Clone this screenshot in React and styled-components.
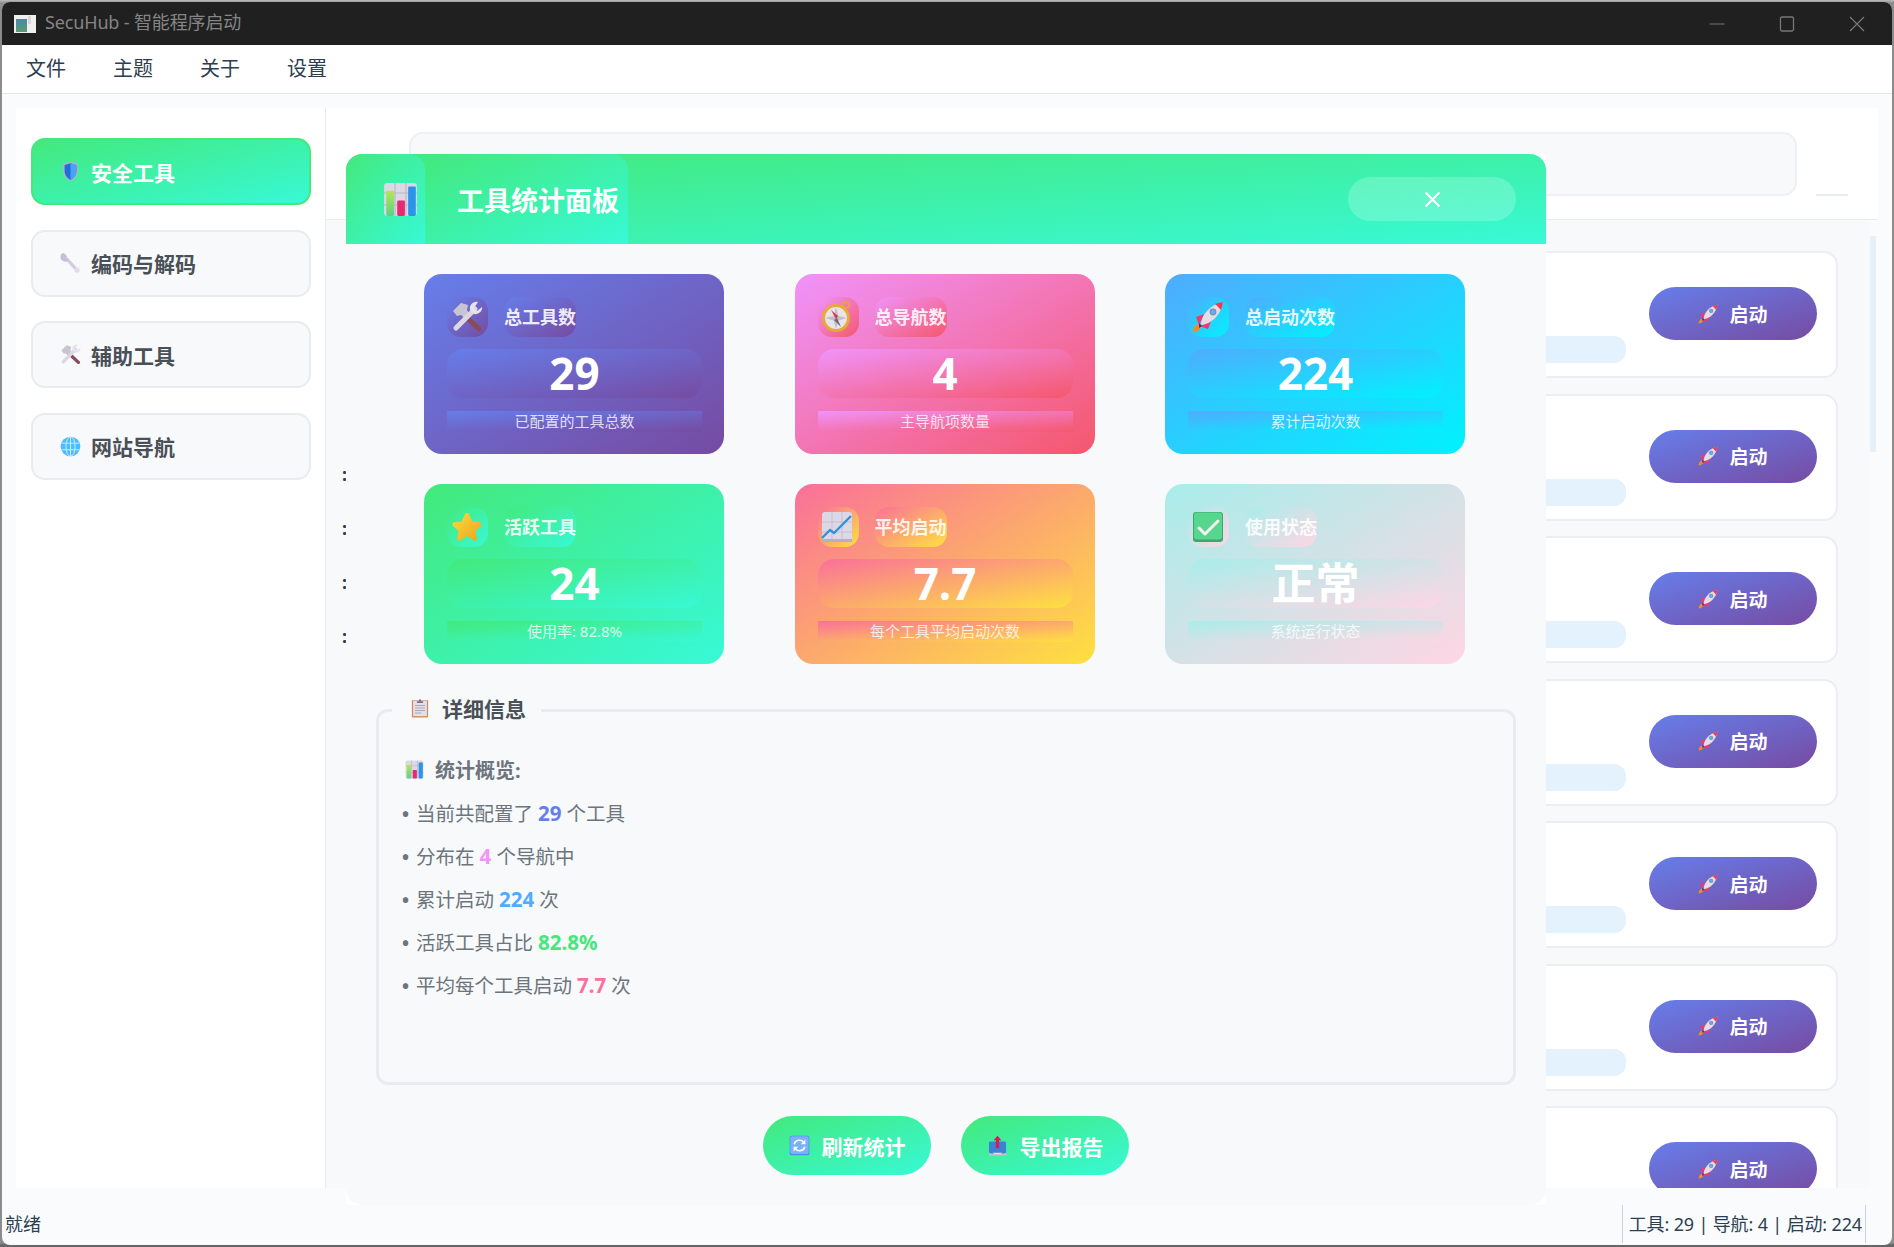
import React from 'react'
import styled, { createGlobalStyle } from 'styled-components'

const FONT = '"Noto Sans", "Noto Sans CJK SC", sans-serif'

const Global = createGlobalStyle`
  html, body { margin: 0; height: 100%; }
  body {
    background: linear-gradient(#bdbdbd 0, #8c8c8c 3px, #8c8c8c 1243px, #666 1245px);
    font-family: ${FONT};
    overflow: hidden;
  }
  * { box-sizing: border-box; }
`

// corner to corner, whatever the shape of the box
const gradient = (pair) => `linear-gradient(to bottom right, ${pair[0]}, ${pair[1]})`

const PURPLE = ['#667eea', '#764ba2']
const PINK = ['#f093fb', '#f5576c']
const BLUE = ['#4facfe', '#00f2fe']
const GREEN = ['#43e97b', '#38f9d7']
const ORANGE = ['#fa709a', '#fee140']
const PASTEL = ['#a8edea', '#fed6e3']

/* ---------- drawn emoji ---------- */

const Svg = ({ size = 24, children }) => (
  <svg width={size} height={size} viewBox="0 0 32 32" style={{ flex: 'none', display: 'block' }}>
    {children}
  </svg>
)

const ChartIcon = ({ size }) => (
  <Svg size={size}>
    <defs>
      <linearGradient id="barGreen" x1="0" y1="0" x2="0" y2="1">
        <stop offset="0" stopColor="#b4e84e" />
        <stop offset="1" stopColor="#5cd08a" />
      </linearGradient>
    </defs>
    <rect x="1" y="1" width="30" height="30" rx="3" fill="#dcd8e6" />
    <path d="M1 10h30M1 21h30M11 1v30M21 1v30" stroke="#b9b5c6" strokeWidth="1" />
    <rect x="3" y="8" width="7" height="23" rx="1" fill="url(#barGreen)" />
    <rect x="13" y="17" width="7" height="14" rx="1" fill="#e8286f" />
    <rect x="23" y="4" width="7" height="27" rx="1" fill="#2a93ea" />
  </Svg>
)

const ToolsIcon = ({ size }) => (
  <Svg size={size}>
    <path d="M12 13l16 15" stroke="#8a4a58" strokeWidth="5" strokeLinecap="round" />
    <path d="M2 10l8-8 7 2-1 5 2 3-5 5-3-3-4 1z" fill="#c9c4d3" />
    <path d="M24 8L5 27" stroke="#dcd7e3" strokeWidth="5" strokeLinecap="round" />
    <path d="M31 6l-5 4-3-3 4-6c-5-1-9 3-8 8l4 4c4 1 9-3 8-7z" fill="#e6e2ec" />
  </Svg>
)

const WrenchIcon = ({ size }) => (
  <Svg size={size}>
    <path d="M10 9l16 17" stroke="#d4cde2" strokeWidth="5" strokeLinecap="round" />
    <path d="M3 3l5 5 3-3-5-5C2 0 0 4 1 8c1 4 6 6 10 5l2-4z" fill="#c7bedb" />
    <circle cx="26" cy="26" r="4" fill="#e2dcec" />
  </Svg>
)

const CompassIcon = ({ size }) => (
  <Svg size={size}>
    <circle cx="25" cy="4" r="3" fill="none" stroke="#e0a93a" strokeWidth="1.6" />
    <circle cx="15" cy="17" r="14" fill="#e6aa35" />
    <circle cx="15" cy="17" r="11" fill="#e8e5ea" />
    <path d="M15 6l2.500 9 8.500 2-8.500 2.500L15 28l-2.500-8.500L4 17l8.500-2z" fill="#c3bfc9" />
    <path d="M10 9l7 6-2 3z" fill="#e0304e" />
    <path d="M20 26l-7-7 3-2z" fill="#6b6770" />
  </Svg>
)

const RocketIcon = ({ size }) => (
  <Svg size={size}>
    <path d="M1 31c0-4 2-7 5-8l3 3c-1 3-4 5-8 5z" fill="#f08a2c" />
    <path d="M4 16l8-3-5 11zM16 28l3-8-11 5z" fill="#f2386e" />
    <path d="M9 23C10 13 18 4 31 1c-2 13-11 21-21 23z" fill="#e6dde4" />
    <path d="M23 2.800 31 1c-.4 3-1.100 5.500-2 8z" fill="#ef3b52" />
    <circle cx="21" cy="11" r="3.400" fill="#7f8fb8" />
    <circle cx="21" cy="11" r="2.200" fill="#58b2ee" />
    <path d="M7 22l3 3-3 2z" fill="#5a2a58" />
  </Svg>
)

const StarIcon = ({ size }) => (
  <Svg size={size}>
    <defs>
      <linearGradient id="starFill" x1="0" y1="0" x2="1" y2="1">
        <stop offset="0" stopColor="#ffdc3c" />
        <stop offset="1" stopColor="#e8a41c" />
      </linearGradient>
    </defs>
    <path
      d="M16 2c1 0 1.800.6 2.300 1.700l3 6.800 7.300.8c2 .3 2.700 2.300 1.300 3.600l-5.500 5 1.500 7.200c.4 2-1.500 3.300-3.200 2.300L16 25l-6.700 4.400c-1.700 1-3.600-.3-3.200-2.300l1.500-7.200-5.500-5c-1.400-1.300-.7-3.300 1.300-3.600l7.300-.8 3-6.800C14.200 2.600 15 2 16 2z"
      fill="url(#starFill)"
    />
  </Svg>
)

const LineChartIcon = ({ size }) => (
  <Svg size={size}>
    <rect x="1" y="1" width="30" height="30" rx="3" fill="#dcd8e6" />
    <path d="M1 11h30M1 21h30M11 1v30M21 1v30" stroke="#c4c0d0" strokeWidth="1" />
    <path d="M1 28h30v3H1z" fill="#b5afc8" />
    <path d="M1 27l8-8 4 3L30 5" fill="none" stroke="#3490dc" strokeWidth="2.400" />
  </Svg>
)

const CheckIcon = ({ size }) => (
  <Svg size={size}>
    <rect x="1" y="1" width="30" height="30" rx="3" fill="#3fa66f" />
    <rect x="2" y="1.500" width="28" height="27" rx="3" fill="#57d68d" />
    <path d="M7 17l6 6L26 10" fill="none" stroke="#f4f4f0" strokeWidth="3" strokeLinecap="round" strokeLinejoin="round" />
  </Svg>
)

const ShieldIcon = ({ size }) => (
  <Svg size={size}>
    <path d="M16 1l11 3v11c0 8-5 13-11 16C10 28 5 23 5 15V4z" fill="#b8aed0" />
    <path d="M16 3.500l9 2.500v9c0 7-4 11-9 14-5-3-9-7-9-14V6z" fill="#1f6fd6" />
    <path d="M16 3.500l9 2.500v9c0 7-4 11-9 14z" fill="#4ba3f7" />
  </Svg>
)

const GlobeIcon = ({ size }) => (
  <Svg size={size}>
    <circle cx="16" cy="16" r="15" fill="#4dbcff" />
    <g fill="none" stroke="#d6eefc" strokeWidth="1.400">
      <ellipse cx="16" cy="16" rx="7" ry="15" />
      <path d="M16 1v30M2 11h28M2 21h28" />
    </g>
  </Svg>
)

const ClipboardIcon = ({ size }) => (
  <Svg size={size}>
    <rect x="3" y="3" width="26" height="28" rx="1.500" fill="#d98a5a" />
    <rect x="5" y="4" width="22" height="25" fill="#e4dfec" />
    <path d="M8 12h16M8 16h16M8 20h16M8 24h10" stroke="#a09bad" strokeWidth="1.300" />
    <path d="M11 5h3c0-4 4-4 4 0h3v3H11z" fill="#7e7889" />
  </Svg>
)

const RefreshIcon = ({ size }) => (
  <Svg size={size}>
    <rect x="1" y="1" width="30" height="30" rx="3" fill="#4f8bf2" />
    <rect x="2" y="2" width="28" height="27" rx="3" fill="#7bb0fb" />
    <path d="M8 14c1-4 4-6 8-6 3 0 5 1 6 3" fill="none" stroke="#fff" strokeWidth="2.600" />
    <path d="M24 18c-1 4-4 6-8 6-3 0-5-1-6-3" fill="none" stroke="#fff" strokeWidth="2.600" />
    <path d="M25 7v7h-7zM7 25v-7h7z" fill="#fff" />
  </Svg>
)

const OutboxIcon = ({ size }) => (
  <Svg size={size}>
    <path d="M3 25h26v5a1 1 0 01-1 1H4a1 1 0 01-1-1z" fill="#c9c2da" />
    <rect x="3" y="10" width="26" height="18" rx="2" fill="#3b82d6" />
    <path d="M9 27h14l-2 2H11z" fill="#e4e0ec" />
    <path d="M16 1l6 7h-3.500v12h-5V8H10z" fill="#d41c5c" />
  </Svg>
)

const AppIcon = () => (
  <svg width="22" height="18" viewBox="0 0 22 18" style={{ flex: 'none', display: 'block' }}>
    <defs>
      <linearGradient id="appTeal" x1="0" y1="0" x2="0" y2="1">
        <stop offset="0" stopColor="#3f8fa8" />
        <stop offset="1" stopColor="#5e9a72" />
      </linearGradient>
    </defs>
    <rect width="22" height="18" fill="#eef0ee" />
    <rect x="2" y="4" width="11" height="13" fill="url(#appTeal)" />
    <rect x="14" y="1" width="3" height="8" fill="#d4d8d6" />
  </svg>
)

/* ---------- window ---------- */

const Window = styled.div`
  position: relative;
  margin: 2px;
  width: 1890px;
  height: 1243px;
  border-radius: 8px;
  overflow: hidden;
  background: #fafbfd;
  display: flex;
  flex-direction: column;
`

const TitleBar = styled.div`
  height: 43px;
  flex: none;
  background: #202020;
  display: flex;
  align-items: center;
  padding: 0 27px 0 12px;
`

const TitleText = styled.div`
  margin-left: 9px;
  padding-bottom: 6px;
  font-size: 18px;
  letter-spacing: -0.15px;
  color: #858585;
  flex: 1;
`

const WinControls = styled.div`
  display: flex;
  align-items: center;
  gap: 54px;
`

const MenuBar = styled.div`
  height: 49px;
  flex: none;
  background: #fff;
  border-bottom: 1px solid #e4e7ea;
  display: flex;
  align-items: center;
  padding: 0 0 4px 24px;
  gap: 47px;
`

const MenuItem = styled.span`
  font-size: 20px;
  color: #2c3e50;
`

const Body = styled.div`
  flex: 1;
  min-height: 0;
  display: flex;
  padding: 14px 14px 17px 14px;
`

const Sidebar = styled.nav`
  width: 310px;
  flex: none;
  background: #fff;
  border-right: 1px solid #e9ecef;
  padding: 30px 14px 0 15px;
  display: flex;
  flex-direction: column;
  gap: 24.5px;
`

const NavButton = styled.div`
  height: 67px;
  border-radius: 14px;
  border: 2px solid ${(p) => (p.$active ? '#43e97b' : '#e9ecef')};
  background: ${(p) => (p.$active ? gradient(GREEN) : '#f8f9fa')};
  color: ${(p) => (p.$active ? '#fff' : '#495057')};
  display: flex;
  align-items: center;
  padding-left: 27px;
  gap: 10px;
  font-size: 21px;
  font-weight: 700;
`

const Main = styled.div`
  flex: 1;
  min-width: 0;
  display: flex;
  flex-direction: column;
`

const MainHeader = styled.div`
  height: 112px;
  flex: none;
  background: #fff;
  border-bottom: 1px solid #e9ecef;
  display: flex;
  align-items: flex-start;
  padding: 24px 30px 0 83px;
  gap: 19px;
`

const SearchBox = styled.div`
  flex: 1;
  height: 64px;
  background: #f8f9fa;
  border: 2px solid #eef0f3;
  border-radius: 14px;
`

const HeaderTick = styled.div`
  width: 32px;
  height: 2px;
  margin-top: 62px;
  background: #e9ecef;
`

const MainRow = styled.div`
  flex: 1;
  min-height: 0;
  display: flex;
`

const Content = styled.div`
  position: relative;
  flex: 1;
  min-width: 0;
  overflow: hidden;
  background: #f8f9fa;
  padding: 31px 32px 0 20px;
  display: flex;
  flex-direction: column;
  gap: 15.5px;
`

const ColonColumn = styled.div`
  position: absolute;
  left: 16px;
  top: 227px;
  font-size: 18px;
  line-height: 54px;
  font-weight: 700;
  color: #2c3e50;
`

const ScrollGutter = styled.div`
  width: 8px;
  flex: none;
  padding-top: 16px;
`

const ScrollThumb = styled.div`
  width: 6px;
  height: 216px;
  background: #e8f0f7;
`

const ToolCard = styled.div`
  height: 127px;
  flex: none;
  background: #fff;
  border: 2px solid #eceef1;
  border-radius: 14px;
  display: flex;
  align-items: center;
  justify-content: flex-end;
  padding: 0 19px 2px 0;
  gap: 23px;
`

const ToolPill = styled.div`
  align-self: flex-end;
  margin-bottom: 11px;
  width: 280px;
  height: 27px;
  background: #e3f2fd;
  border-radius: 12px;
`

const StartButton = styled.div`
  width: 168px;
  height: 53px;
  border-radius: 27px;
  background: ${gradient(PURPLE)};
  color: #fff;
  font-size: 19px;
  font-weight: 700;
  display: flex;
  align-items: center;
  justify-content: center;
  gap: 11px;
`

const StatusBar = styled.div`
  height: 40px;
  flex: none;
  display: flex;
  align-items: flex-start;
  justify-content: space-between;
  padding: 0 26px 0 3px;
  font-size: 18px;
  line-height: 38px;
  color: #2c3e50;
`

const StatusRight = styled.div`
  height: 38px;
  padding: 0 3px 0 6px;
  letter-spacing: -0.15px;
  border-left: 1px solid #cfd2d6;
  border-right: 1px solid #cfd2d6;
`

/* ---------- statistics dialog ---------- */

const Dialog = styled.div`
  position: absolute;
  left: 344px;
  top: 152px;
  width: 1200px;
  height: 1051px;
  background: #fff;
`

const DialogInner = styled.div`
  height: 100%;
  border-radius: 16px;
  overflow: hidden;
  background: #f8f9fa;
  display: flex;
  flex-direction: column;
`

const DialogHeader = styled.div`
  height: 90px;
  flex: none;
  background: ${gradient(GREEN)};
  display: flex;
  align-items: center;
`

const HeaderChip = styled.div`
  align-self: stretch;
  border-radius: 16px 16px 0 0;
  background: ${gradient(GREEN)};
  display: flex;
  align-items: center;
  padding-left: ${(p) => p.$pad}px;
  width: ${(p) => p.$w}px;
  color: #fff;
  font-size: 27px;
  font-weight: 700;
`

const CloseButton = styled.div`
  margin-left: auto;
  margin-right: 30px;
  width: 168px;
  height: 44px;
  border-radius: 22px;
  background: rgba(255, 255, 255, 0.2);
  display: flex;
  align-items: center;
  justify-content: center;
`

const StatGrid = styled.div`
  display: grid;
  grid-template-columns: repeat(3, 300px);
  column-gap: 70.5px;
  row-gap: 30px;
  padding: 30px 0 0 78px;
`

const StatCard = styled.div`
  height: 180px;
  border-radius: 18px;
  background: ${(p) => gradient(p.$colors)};
  padding: 23px 22px 0 23px;
`

const StatTop = styled.div`
  display: flex;
  gap: 16px;
`

const IconChip = styled.div`
  width: 41px;
  height: 40px;
  border-radius: 14px;
  background: ${(p) => gradient(p.$colors)};
  display: flex;
  align-items: center;
  justify-content: center;
  padding-right: 2px;
`

const LabelChip = styled.div`
  height: 40px;
  line-height: 40px;
  border-radius: 14px;
  background: ${(p) => gradient(p.$colors)};
  color: rgba(255, 255, 255, 0.9);
  font-size: 18px;
  font-weight: 700;
`

const ValueChip = styled.div`
  margin-top: 12px;
  height: 49px;
  line-height: 49px;
  border-radius: 16px;
  background: ${(p) => gradient(p.$colors)};
  color: #fff;
  font-size: 44px;
  font-weight: 700;
  text-align: center;
`

const DescChip = styled.div`
  margin-top: 13px;
  height: 21px;
  line-height: 21px;
  background: ${(p) => gradient(p.$colors)};
  color: rgba(255, 255, 255, 0.8);
  font-size: 15px;
  text-align: center;
`

const DetailGroup = styled.fieldset`
  margin: 31px 30px 0 30px;
  padding: 0 0 0 22px;
  height: 390px;
  min-width: 0;
  border: 3px solid #e9ecef;
  border-radius: 12px;
`

const DetailLegend = styled.legend`
  margin-left: -9px;
  padding: 0 15px 4px 18px;
  height: 30px;
  display: flex;
  align-items: center;
  gap: 12px;
  font-size: 21px;
  font-weight: 700;
  color: #495057;
`

const OverviewLine = styled.div`
  margin: 23px 0 1px 4px;
  height: 43px;
  display: flex;
  align-items: center;
  gap: 11px;
  font-size: 20px;
  font-weight: 700;
  color: #6c757d;
`

const InfoLine = styled.div`
  height: 43px;
  line-height: 43px;
  font-size: 19.5px;
  color: #6c757d;
`

const Bullet = styled.span`
  display: inline-block;
  width: 15px;
  font-size: 24px;
  line-height: 1;
  vertical-align: -2px;
`

const Num = styled.b`
  color: ${(p) => p.$color};
  font-size: 20.5px;
  font-weight: 700;
`

const DialogActions = styled.div`
  display: flex;
  justify-content: center;
  gap: 30px;
  margin-top: 31px;
`

const ActionButton = styled.div`
  width: 168px;
  height: 59px;
  border-radius: 30px;
  background: ${gradient(GREEN)};
  color: #fff;
  font-size: 21px;
  font-weight: 700;
  display: flex;
  align-items: center;
  justify-content: center;
  gap: 12px;
`

/* ---------- data ---------- */

const navItems = [
  { label: '安全工具', Icon: ShieldIcon, active: true },
  { label: '编码与解码', Icon: WrenchIcon },
  { label: '辅助工具', Icon: ToolsIcon },
  { label: '网站导航', Icon: GlobeIcon },
]

const stats = [
  { label: '总工具数', value: '29', desc: '已配置的工具总数', colors: PURPLE, Icon: ToolsIcon },
  { label: '总导航数', value: '4', desc: '主导航项数量', colors: PINK, Icon: CompassIcon },
  { label: '总启动次数', value: '224', desc: '累计启动次数', colors: BLUE, Icon: RocketIcon },
  { label: '活跃工具', value: '24', desc: '使用率: 82.8%', colors: GREEN, Icon: StarIcon },
  { label: '平均启动', value: '7.7', desc: '每个工具平均启动次数', colors: ORANGE, Icon: LineChartIcon },
  { label: '使用状态', value: '正常', desc: '系统运行状态', colors: PASTEL, Icon: CheckIcon },
]

const infoLines = [
  ['当前共配置了 ', '29', ' 个工具', '#667eea'],
  ['分布在 ', '4', ' 个导航中', '#f093fb'],
  ['累计启动 ', '224', ' 次', '#4facfe'],
  ['活跃工具占比 ', '82.8%', '', '#43e97b'],
  ['平均每个工具启动 ', '7.7', ' 次', '#fa709a'],
]

const toolRows = [0, 1, 2, 3, 4, 5, 6]

export default function App() {
  return (
    <>
      <Global />
      <Window>
        <TitleBar>
          <AppIcon />
          <TitleText>SecuHub - 智能程序启动</TitleText>
          <WinControls>
            <svg width="16" height="16" viewBox="0 0 16 16">
              <path d="M0.500 8h15" stroke="#777" strokeWidth="1.200" />
            </svg>
            <svg width="16" height="16" viewBox="0 0 16 16">
              <rect x="1.500" y="1" width="13" height="14" rx="1.500" fill="none" stroke="#777" strokeWidth="1.300" />
            </svg>
            <svg width="16" height="16" viewBox="0 0 16 16">
              <path d="M1 1l14 14M15 1L1 15" stroke="#777" strokeWidth="1.200" />
            </svg>
          </WinControls>
        </TitleBar>

        <MenuBar>
          {['文件', '主题', '关于', '设置'].map((m) => (
            <MenuItem key={m}>{m}</MenuItem>
          ))}
        </MenuBar>

        <Body>
          <Sidebar>
            {navItems.map(({ label, Icon, active }) => (
              <NavButton key={label} $active={active}>
                <Icon size={21} />
                {label}
              </NavButton>
            ))}
          </Sidebar>

          <Main>
            <MainHeader>
              <SearchBox />
              <HeaderTick />
            </MainHeader>
            <MainRow>
              <Content>
                {toolRows.map((row) => (
                  <ToolCard key={row}>
                    <ToolPill />
                    <StartButton>
                      <RocketIcon size={20} />
                      启动
                    </StartButton>
                  </ToolCard>
                ))}
                <ColonColumn>
                  :<br />:<br />:<br />:
                </ColonColumn>
              </Content>
              <ScrollGutter>
                <ScrollThumb />
              </ScrollGutter>
            </MainRow>
          </Main>
        </Body>

        <StatusBar>
          <span>就绪</span>
          <StatusRight>工具: 29 | 导航: 4 | 启动: 224</StatusRight>
        </StatusBar>

        <Dialog>
          <DialogInner>
            <DialogHeader>
              <HeaderChip $w={79} $pad={37}>
                <ChartIcon size={35} />
              </HeaderChip>
              <HeaderChip $w={203} $pad={32}>
                工具统计面板
              </HeaderChip>
              <CloseButton>
                <svg width="17" height="17" viewBox="0 0 16 16">
                  <path d="M1.500 1.500l13 13M14.500 1.500l-13 13" stroke="#fff" strokeWidth="2" />
                </svg>
              </CloseButton>
            </DialogHeader>

            <StatGrid>
              {stats.map(({ label, value, desc, colors, Icon }) => (
                <StatCard key={label} $colors={colors}>
                  <StatTop>
                    <IconChip $colors={colors}>
                      <Icon size={32} />
                    </IconChip>
                    <LabelChip $colors={colors}>{label}</LabelChip>
                  </StatTop>
                  <ValueChip $colors={colors}>{value}</ValueChip>
                  <DescChip $colors={colors}>{desc}</DescChip>
                </StatCard>
              ))}
            </StatGrid>

            <DetailGroup>
              <DetailLegend>
                <ClipboardIcon size={20} />
                详细信息
              </DetailLegend>
              <OverviewLine>
                <ChartIcon size={19} />
                统计概览:
              </OverviewLine>
              {infoLines.map(([before, num, after, color]) => (
                <InfoLine key={before}>
                  <Bullet>•</Bullet>
                  {before}
                  <Num $color={color}>{num}</Num>
                  {after}
                </InfoLine>
              ))}
            </DetailGroup>

            <DialogActions>
              <ActionButton>
                <RefreshIcon size={21} />
                刷新统计
              </ActionButton>
              <ActionButton>
                <OutboxIcon size={21} />
                导出报告
              </ActionButton>
            </DialogActions>
          </DialogInner>
        </Dialog>
      </Window>
    </>
  )
}
